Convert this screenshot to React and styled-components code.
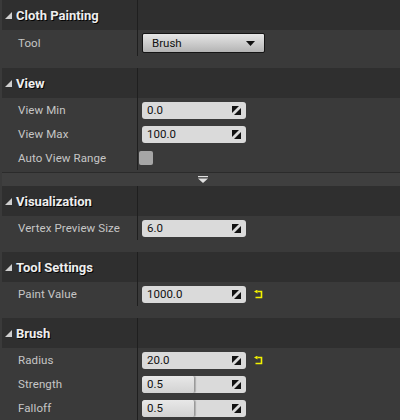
import React from 'react';
import styled, {createGlobalStyle} from 'styled-components';

const GlobalStyle = createGlobalStyle`
    html, body {
        margin: 0;
        padding: 0;
        background: #3a3a3a;
    }
    body {
        font-family: Roboto, "Noto Sans", "Liberation Sans", sans-serif;
    }
`;

const Panel = styled.div`
    width: 400px;
    height: 420px;
    overflow: hidden;
    background: #3a3a3a;
`;

const Section = styled.div`
    padding-bottom: ${props => props.$last ? 0 : 12}px;
`;

const Header = styled.div`
    display: grid;
    grid-template-columns: 135px 1fr;
    height: 30px;
    margin-left: 2px;
    background: #2f2f2f;
`;

const HeaderTitle = styled.div`
    display: flex;
    align-items: center;
    gap: 4px;
    padding-left: 3px;
    color: #eeeeee;
    font-size: 13px;
    font-weight: 700;
    text-shadow: 1px 1px 0 #050505;
`;

const Divider = styled.div`
    border-left: 1px solid #1f1f1f;
`;

const Row = styled.div`
    display: grid;
    grid-template-columns: 137px 1fr;
    height: ${props => props.$tall ? 26 : 24}px;
`;

const Label = styled.div`
    display: flex;
    align-items: center;
    padding-left: 18px;
    color: #c6c6c6;
    font-size: 11.5px;
    letter-spacing: 0.1px;
`;

const ValueCell = styled.div`
    display: flex;
    align-items: center;
    gap: 8px;
    padding-left: 4px;
    border-left: 1px solid #1f1f1f;
`;

const Combo = styled.div`
    display: flex;
    align-items: center;
    justify-content: space-between;
    box-sizing: border-box;
    width: 123px;
    height: 20px;
    padding: 0 9px 0 9px;
    border: 1px solid #151515;
    border-radius: 2px;
    background: linear-gradient(#e6e6e6, #b4b4b4);
    color: #111;
    font-size: 11.5px;
`;

const NumberBox = styled.div`
    position: relative;
    display: flex;
    align-items: center;
    box-sizing: border-box;
    width: 104px;
    height: 17px;
    border-radius: 3px;
    background: #dadada;
    color: #111;
    font-size: 11.5px;
    overflow: hidden;
`;

const SliderFill = styled.div`
    position: absolute;
    left: 0;
    top: 0;
    bottom: 0;
    border-right: 1px solid #9a9a9a;
    border-radius: 3px 2px 2px 3px;
    background: linear-gradient(#e8e8e8, #d2d2d2);
    box-shadow: 1px 0 1px rgba(0, 0, 0, 0.2);
`;

const NumberText = styled.span`
    position: relative;
    padding-left: 5px;
    flex: 1;
`;

const SpinIcon = styled.svg`
    position: relative;
    margin-right: 5px;
`;

const CheckBox = styled.div`
    width: 14px;
    height: 14px;
    margin-left: -3px;
    border-radius: 2px;
    background: #a6a6a6;
`;

const ExpanderBar = styled.div`
    display: flex;
    justify-content: center;
    align-items: center;
    box-sizing: border-box;
    height: 14px;
    margin: 2px 0 0 2px;
    background: #3f3f3f;
    border-top: 1px solid #2b2b2b;
    padding-left: 4px;
`;

const Triangle = () => (
    <svg width="7" height="7" viewBox="0 0 7 7">
        <polygon points="7,0 7,7 0,7" fill="#cfcfcf" />
    </svg>
);

const Spin = () => (
    <SpinIcon width="9" height="9" viewBox="0 0 9 9">
        <polygon points="0,0 7,0 0,7" fill="#111" />
        <polygon points="9,9 2,9 9,2" fill="#111" />
    </SpinIcon>
);

const ResetIcon = () => (
    <svg width="9" height="9" viewBox="0 0 9 9">
        <path d="M3.5 1.5 H7.5 V7.5 H1.5" fill="none" stroke="#f2f200" strokeWidth="1.6" />
        <polygon points="0,1.5 3.5,-0.5 3.5,3.5" fill="#f2f200" />
    </svg>
);

const sections = [
    {key: 'cloth', title: 'Cloth Painting', rows: [{label: 'Tool', type: 'combo', value: 'Brush'}]},
    {key: 'view', title: 'View', expander: true, rows: [
        {label: 'View Min', type: 'number', value: '0.0'},
        {label: 'View Max', type: 'number', value: '100.0'},
        {label: 'Auto View Range', type: 'check'}
    ]},
    {key: 'vis', title: 'Visualization', rows: [{label: 'Vertex Preview Size', type: 'number', value: '6.0'}]},
    {key: 'tool', title: 'Tool Settings', rows: [{label: 'Paint Value', type: 'number', value: '1000.0', reset: true}]},
    {key: 'brush', title: 'Brush', rows: [
        {label: 'Radius', type: 'number', value: '20.0', reset: true},
        {label: 'Strength', type: 'number', value: '0.5', slider: 0.5},
        {label: 'Falloff', type: 'number', value: '0.5', slider: 0.5}
    ]}
];

const renderValue = (row) => {
    if (row.type === 'combo') {
        return (
            <Combo>
                <span>{row.value}</span>
                <svg width="9" height="5" viewBox="0 0 9 5">
                    <polygon points="0,0 9,0 4.5,5" fill="#111" />
                </svg>
            </Combo>
        );
    }
    if (row.type === 'check') {
        return <CheckBox />;
    }
    return (
        <>
            <NumberBox>
                {row.slider && <SliderFill style={{width: `${row.slider * 100}%`}} />}
                <NumberText>{row.value}</NumberText>
                <Spin />
            </NumberBox>
            {row.reset && <ResetIcon />}
        </>
    );
};

const App = () => (
    <Panel>
        <GlobalStyle />
        {sections.map((section, i) => (
            <Section key={section.key} $last={i === sections.length - 1 || section.expander}>
                <Header>
                    <HeaderTitle>
                        <Triangle />
                        <span>{section.title}</span>
                    </HeaderTitle>
                    <Divider />
                </Header>
                {section.rows.map(row => (
                    <Row key={row.label} $tall={row.type === 'combo'}>
                        <Label>{row.label}</Label>
                        <ValueCell>{renderValue(row)}</ValueCell>
                    </Row>
                ))}
                {section.expander && (
                    <ExpanderBar>
                        <svg width="10" height="7" viewBox="0 0 10 7">
                            <rect x="0" y="0" width="10" height="1.2" fill="#e0e0e0" />
                            <polygon points="0,2.4 10,2.4 5,7" fill="#e0e0e0" />
                        </svg>
                    </ExpanderBar>
                )}
            </Section>
        ))}
    </Panel>
);

export default App;
